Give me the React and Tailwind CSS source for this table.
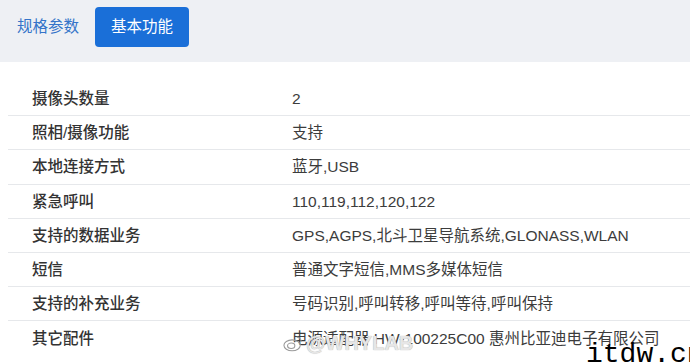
import React from "react";

const rows = [
  ["摄像头数量", "2"],
  ["照相/摄像功能", "支持"],
  ["本地连接方式", "蓝牙,USB"],
  ["紧急呼叫", "110,119,112,120,122"],
  ["支持的数据业务", "GPS,AGPS,北斗卫星导航系统,GLONASS,WLAN"],
  ["短信", "普通文字短信,MMS多媒体短信"],
  ["支持的补充业务", "号码识别,呼叫转移,呼叫等待,呼叫保持"],
  ["其它配件", "电源适配器 HW-100225C00 惠州比亚迪电子有限公司"],
];

export default function App() {
  return (
    <div
      className="relative w-[690px] h-[364px] overflow-hidden bg-white"
      style={{ fontFamily: '"Liberation Sans", "Noto Sans CJK SC", sans-serif' }}
    >
      <div className="h-[62px] bg-[#eef0f4] flex items-start pt-[7px] pl-[17px] gap-[16px]">
        <div className="h-[40px] flex items-center text-[15.5px] text-[#3474c9]">规格参数</div>
        <div className="h-[40px] px-[16px] flex items-center rounded-[4px] bg-[#1a6fd8] text-white text-[15.5px]">
          基本功能
        </div>
      </div>
      <div className="pt-[20px] pl-[8px]">
        {rows.map(([k, v], i) => (
          <div
            key={k}
            className={`flex items-center h-[34.2px] ${i < rows.length - 1 ? "border-b border-[#e6e8eb]" : ""}`}
          >
            <div className="w-[284px] pl-[24px] text-[15.5px] font-medium text-[#333333]">{k}</div>
            <div className="text-[15.5px] text-[#3c3c3c] whitespace-nowrap">{v}</div>
          </div>
        ))}
      </div>
      <div className="absolute left-[283px] top-[328px] flex items-center gap-[3px] text-[#e6e6e6] text-[20px] font-bold" style={{ textShadow: "0 0 1px #9a9a9a" }}>
        <svg width="20" height="17" viewBox="0 0 22 18">
          <ellipse cx="10" cy="11" rx="9" ry="6" fill="none" stroke="#9a9a9a" strokeWidth="1.2" />
          <ellipse cx="9" cy="11.5" rx="4" ry="3" fill="none" stroke="#9a9a9a" strokeWidth="1.2" />
          <path d="M15 2 a5 5 0 0 1 5 5" fill="none" stroke="#9a9a9a" strokeWidth="1.2" />
        </svg>
        <span>@WHYLAB</span>
      </div>
      <div
        className="absolute left-[586px] top-[341px] text-[28px] text-black leading-none whitespace-nowrap"
        style={{ fontFamily: '"Liberation Mono", monospace' }}
      >
        itdw.cn
      </div>
    </div>
  );
}
